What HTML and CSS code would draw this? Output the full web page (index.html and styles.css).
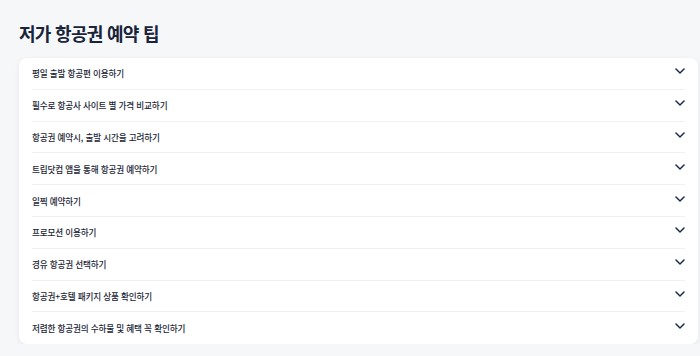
FILE: index.html
```html
<!DOCTYPE html>
<html lang="ko">
<head>
    <meta charset="UTF-8">
    <meta name="viewport" content="width=device-width, initial-scale=1.0">
    <title>저가 항공권 예약 팁</title>
    <link rel="stylesheet" href="styles.css">
</head>
<body>
    <section class="tips">
        <h2 class="tips-title">저가 항공권 예약 팁</h2>
        <div class="tips-card">
            <div class="tip-row"><span>평일 출발 항공편 이용하기</span><svg class="chev" viewBox="0 0 10 6"><path d="M1 1l4 4 4-4"/></svg></div>
            <div class="tip-row"><span>필수로 항공사 사이트 별 가격 비교하기</span><svg class="chev" viewBox="0 0 10 6"><path d="M1 1l4 4 4-4"/></svg></div>
            <div class="tip-row"><span>항공권 예약시, 출발 시간을 고려하기</span><svg class="chev" viewBox="0 0 10 6"><path d="M1 1l4 4 4-4"/></svg></div>
            <div class="tip-row"><span>트립닷컴 앱을 통해 항공권 예약하기</span><svg class="chev" viewBox="0 0 10 6"><path d="M1 1l4 4 4-4"/></svg></div>
            <div class="tip-row"><span>일찍 예약하기</span><svg class="chev" viewBox="0 0 10 6"><path d="M1 1l4 4 4-4"/></svg></div>
            <div class="tip-row"><span>프로모션 이용하기</span><svg class="chev" viewBox="0 0 10 6"><path d="M1 1l4 4 4-4"/></svg></div>
            <div class="tip-row"><span>경유 항공권 선택하기</span><svg class="chev" viewBox="0 0 10 6"><path d="M1 1l4 4 4-4"/></svg></div>
            <div class="tip-row"><span>항공권+호텔 패키지 상품 확인하기</span><svg class="chev" viewBox="0 0 10 6"><path d="M1 1l4 4 4-4"/></svg></div>
            <div class="tip-row"><span>저렴한 항공권의 수하물 및 혜택 꼭 확인하기</span><svg class="chev" viewBox="0 0 10 6"><path d="M1 1l4 4 4-4"/></svg></div>
        </div>
    </section>
</body>
</html>
```
FILE: styles.css
```css
body {
    margin: 0;
    background: #f6f7f9;
    font-family: "Noto Sans CJK KR", "Noto Sans", sans-serif;
    color: #1a2433;
}

.tips {
    padding: 20px 2px 0 19px;
}

.tips-title {
    margin: 0 0 12px;
    font-size: 18px;
    line-height: 26px;
    font-weight: 700;
    letter-spacing: -0.7px;
    color: #18243a;
}

.tips-card {
    background: #fff;
    border-radius: 8px;
    box-shadow: 0 2px 6px rgba(20, 30, 50, 0.07);
    padding: 0 13px;
}

.tip-row {
    display: flex;
    align-items: center;
    justify-content: space-between;
    height: 31.8px;
    box-sizing: border-box;
    border-bottom: 1px solid #eef0f3;
    font-size: 8.6px;
    font-weight: 500;
    letter-spacing: -0.15px;
    color: #1b2535;
}

.tip-row:last-child {
    border-bottom: none;
}

.chev {
    width: 10px;
    height: 6px;
    margin-top: -4px;
    fill: none;
    stroke: #1e2a44;
    stroke-width: 1.5;
    stroke-linecap: round;
    stroke-linejoin: round;
}
```
